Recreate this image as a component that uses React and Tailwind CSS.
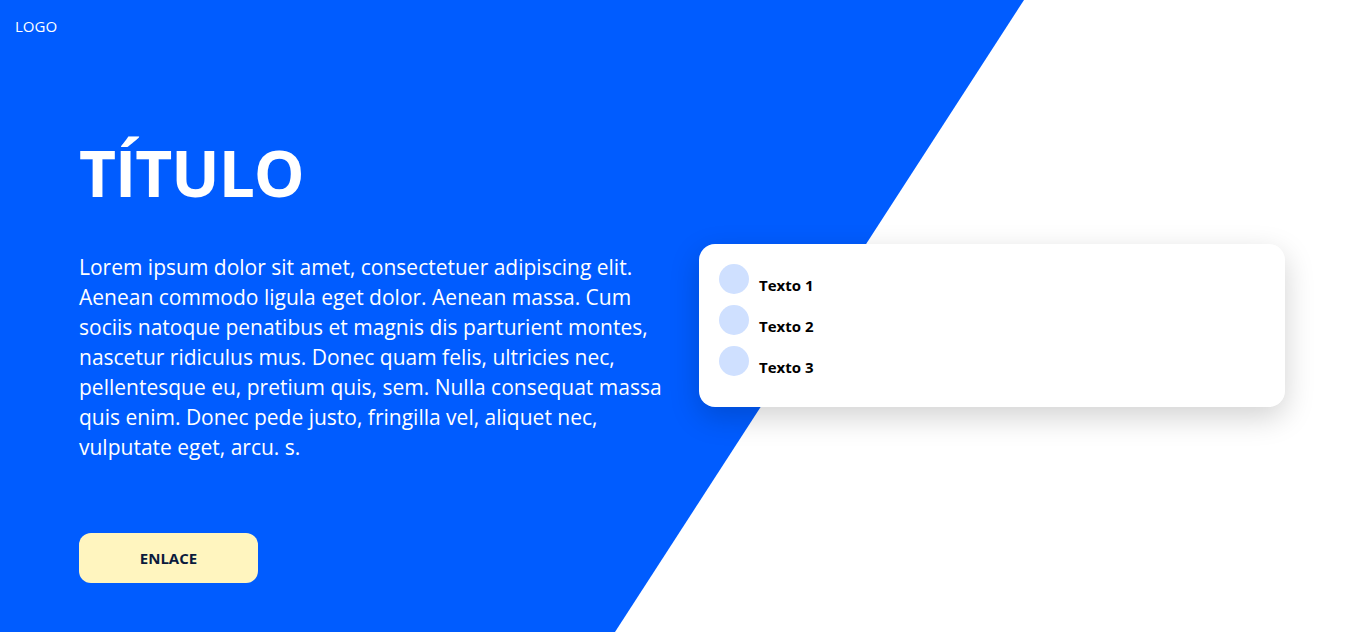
export default function App() {
  const items = ['Texto 1', 'Texto 2', 'Texto 3'];

  return (
    <div
      className="relative h-[632px] w-full overflow-hidden bg-white"
      style={{ fontFamily: '"Open Sans", "Noto Sans", sans-serif' }}
    >
      {/* diagonal blue background */}
      <div className="absolute inset-0 bg-[#005cff] [clip-path:polygon(0_0,1024px_0,615px_100%,0_100%)]" />

      <div className="relative flex h-full flex-col">
        <header className="px-[15px] pt-[16px] text-[15px] leading-5 text-white">LOGO</header>

        <main className="flex flex-1 items-start px-[79px] pt-[97px]">
          <section className="w-[600px] text-white">
            <h1 className="text-[64px] font-bold leading-[80px] tracking-[-1px]">TÍTULO</h1>
            <p className="mt-[39px] w-[620px] text-[21px] leading-[30px]">
              Lorem ipsum dolor sit amet, consectetuer adipiscing elit.
              <br />
              Aenean commodo ligula eget dolor. Aenean massa. Cum
              <br />
              sociis natoque penatibus et magnis dis parturient montes,
              <br />
              nascetur ridiculus mus. Donec quam felis, ultricies nec,
              <br />
              pellentesque eu, pretium quis, sem. Nulla consequat massa
              <br />
              quis enim. Donec pede justo, fringilla vel, aliquet nec,
              <br />
              vulputate eget, arcu. s.
            </p>
            <a
              href="#"
              className="mt-[71px] flex h-[50px] w-[179px] items-center justify-center rounded-xl bg-[#fff5bf] text-[15px] font-bold text-[#0b1a3c]"
            >
              ENLACE
            </a>
          </section>

          <div className="ml-[20px] mt-[111px] w-[586px] rounded-2xl bg-white px-5 pb-[20px] pt-5 shadow-[0_10px_30px_rgba(0,0,0,0.18)]">
            <ul className="flex flex-col">
              {items.map((t) => (
                <li key={t} className="flex h-[41px] items-start gap-[10px]">
                  <span className="h-[30px] w-[30px] shrink-0 rounded-full bg-[#cfe0ff]" />
                  <span className="mt-[11px] text-[15px] font-bold leading-5 text-black">{t}</span>
                </li>
              ))}
            </ul>
          </div>
        </main>
      </div>
    </div>
  );
}
